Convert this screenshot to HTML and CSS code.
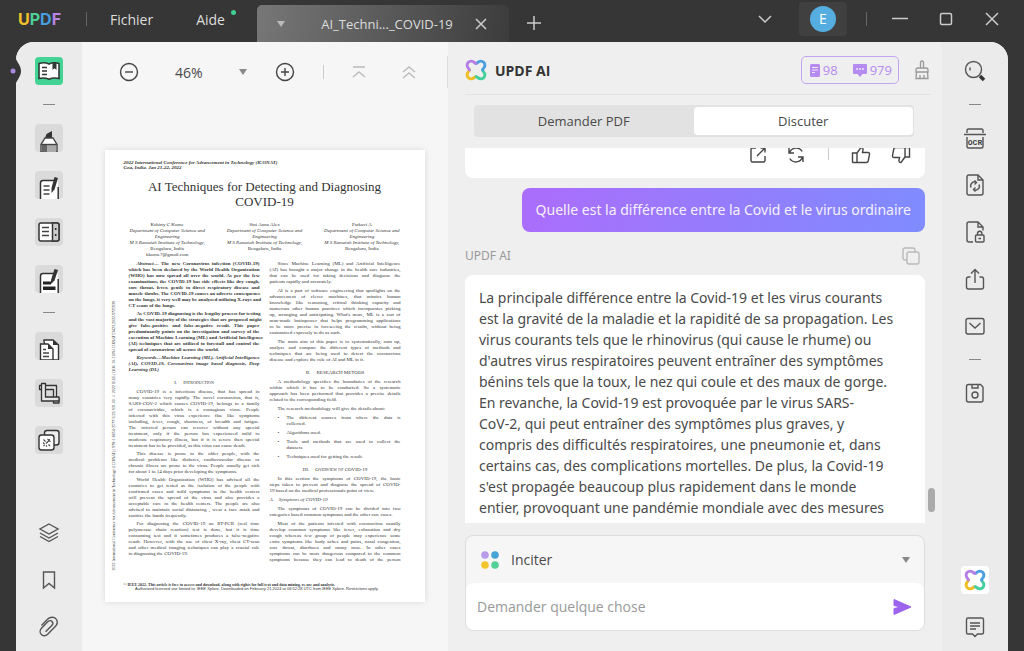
FILE: index.html
```html
<!DOCTYPE html>
<html lang="fr">
<head>
  <meta charset="UTF-8" />
  <meta name="viewport" content="width=device-width, initial-scale=1" />
  <title>UPDF - AI_Techniques_COVID-19</title>
  <link rel="stylesheet" href="styles.css">
</head>
<body>
  <svg class="defs" aria-hidden="true">
    <symbol id="clover" viewBox="0 0 24 24">
      <g fill="none" stroke-width="3.2" stroke-linecap="round">
        <path stroke="#f0bd22" transform="rotate(-90 12 12)" d="M4.8 12C4.8 10.5 2.3 9.5 2.3 6.8A4.5 4.5 0 0 1 6.8 2.3C9.5 2.3 10.5 4.8 12 4.8"/>
        <path stroke="#45cf9b" transform="rotate(180 12 12)" d="M4.8 12C4.8 10.5 2.3 9.5 2.3 6.8A4.5 4.5 0 0 1 6.8 2.3C9.5 2.3 10.5 4.8 12 4.8"/>
        <path stroke="#4a9fe0" transform="rotate(90 12 12)" d="M4.8 12C4.8 10.5 2.3 9.5 2.3 6.8A4.5 4.5 0 0 1 6.8 2.3C9.5 2.3 10.5 4.8 12 4.8"/>
        <path stroke="#b57de6" d="M4.8 12C4.8 10.5 2.3 9.5 2.3 6.8A4.5 4.5 0 0 1 6.8 2.3C9.5 2.3 10.5 4.8 12 4.8"/>
      </g>
    </symbol>
  </svg>

  <header class="titlebar">
    <div class="logo"><span class="u">U</span><span class="p">P</span><span class="d">D</span><span class="f">F</span></div>
    <span class="bar"></span>
    <nav class="menu">
      <a href="#">Fichier</a>
      <a href="#" class="has-dot">Aide</a>
    </nav>
    <div class="doc-tab">
      <button aria-label="Liste des onglets"><span class="caret"></span></button>
      <span class="doc-name">AI_Techni..._COVID-19</span>
      <button aria-label="Fermer l'onglet"><svg width="12" height="12" viewBox="0 0 12 12"><path d="M1 1l10 10M11 1L1 11"/></svg></button>
    </div>
    <button class="new-tab" aria-label="Nouvel onglet"><svg width="14" height="14" viewBox="0 0 14 14"><path d="M7 0v14M0 7h14"/></svg></button>
    <div class="win-controls">
      <button aria-label="Plus"><svg width="14" height="14" viewBox="0 0 14 14"><path d="M1 4l6 6 6-6"/></svg></button>
      <button class="account" aria-label="Compte"><span class="avatar">E</span></button>
      <span class="bar"></span>
      <button class="win-btn" aria-label="Réduire"><svg width="18" height="14" viewBox="0 0 18 14"><path d="M1 6.500h16"/></svg></button>
      <button class="win-btn" aria-label="Agrandir"><svg width="14" height="14" viewBox="0 0 14 14"><rect x="1.500" y="1.500" width="11" height="11" rx="1.500"/></svg></button>
      <button class="win-btn" aria-label="Fermer"><svg width="14" height="14" viewBox="0 0 14 14"><path d="M1 1l12 12M13 1L1 13"/></svg></button>
    </div>
  </header>

  <main class="window">
    <svg class="notch" width="14" height="32" viewBox="0 0 14 32"><path d="M0 0h5c0 6 6 9 6 16s-6 10-6 16H0z" fill="#363636"/><circle cx="3" cy="16" r="2.500" fill="#a98ae0"/></svg>

    <aside class="rail">
      <div class="rail-group">
        <button class="tile active" aria-label="Lecture"><svg viewBox="0 0 28 28">
          <path d="M4 6.500c3-1 7-1 10 .5 3-1.500 7-1.500 10-.5v15c-3-.6-7-.6-10 .8-3-1.400-7-1.400-10-.8z" fill="#fff" stroke="#2f3a36" stroke-width="1.600"/>
          <path d="M7 10.500h5M7 14h5M7 17.500h5" stroke="#333" stroke-width="1.500"/><path d="M17.500 5h4v8l-2-1.800-2 1.800z" fill="#2f3a36"/></svg></button>
        <span class="dash"></span>
        <button class="tile" aria-label="Surligner"><svg viewBox="0 0 28 28">
          <path d="M10 14l1.500-4L17 7v7z" fill="#333"/><path d="M10 14h8l4 6.500V28H6v-7.500z" fill="#fff" stroke="#444" stroke-width="1.400"/><path d="M7 21h14v7H7z" fill="#aaa"/><path d="M7 21h5v7H7z" fill="#666"/><path d="M6 20.500h16" stroke="#444" stroke-width="1.400"/></svg></button>
        <button class="tile" aria-label="Modifier"><svg viewBox="0 0 28 28">
          <path d="M5.500 28V12c0-1.500.8-2.500 2.500-2.500h15V28z" fill="#fff"/><path d="M5.500 28V12c0-1.500.8-2.500 2.500-2.500h11M23.200 16v12" fill="none" stroke="#333" stroke-width="1.500"/>
          <path d="M8.500 15h6M8.500 19h6M8.500 23h6" stroke="#444" stroke-width="1.400"/><path d="M19.500 6l3.500 1-3.500 11.500-3 3.500V17z" fill="#333"/></svg></button>
        <button class="tile" aria-label="Formulaire"><svg viewBox="0 0 28 28">
          <rect x="4" y="5" width="20" height="18" rx="2" fill="#fff" stroke="#333" stroke-width="1.500"/><path d="M17.500 5H22a2 2 0 0 1 2 2v14a2 2 0 0 1-2 2h-4.500z" fill="#ccc" stroke="#333" stroke-width="1.500"/>
          <path d="M7 9.500h7M7 13.500h7M7 17.500h7" stroke="#444" stroke-width="1.400"/><circle cx="20.700" cy="11" r="1" fill="#222"/><circle cx="20.700" cy="17" r="1" fill="#222"/></svg></button>
        <button class="tile" aria-label="Caviarder"><svg viewBox="0 0 28 28">
          <path d="M5.500 28V11c0-1.500.8-2.500 2.500-2.500h15V28z" fill="#fff"/><path d="M5.500 28V11c0-1.500.8-2.500 2.500-2.500h11M23.200 14v14" fill="none" stroke="#333" stroke-width="1.500"/>
          <path d="M8 16.500h8v3H8zM8 21.500h12.500v3.500H8z" fill="#222"/><path d="M19.500 4l3.500 1-3.500 10.500-3.500 3.500v-4z" fill="#333"/></svg></button>
        <span class="dash"></span>
        <button class="tile" aria-label="Organiser les pages"><svg viewBox="0 0 28 28">
          <path d="M9 9.500V8h9l5.500 5V28H14z" fill="#fff" stroke="#333" stroke-width="1.400"/><path d="M18 8l5.500 5H18z" fill="#333"/>
          <path d="M5.500 28V12h7.500l5 5v11z" fill="#fff" stroke="#333" stroke-width="1.400"/><path d="M13 12l5 5h-5z" fill="#333"/><path d="M8 17.500h3M8 21h6M8 24.500h6" stroke="#444" stroke-width="1.300"/></svg></button>
        <button class="tile" aria-label="Recadrer"><svg viewBox="0 0 28 28">
          <g fill="#e6e6e6" stroke="#333" stroke-width="1.300" stroke-linejoin="round">
            <path d="M4.500 6.500h17v13.500h2.500v4h-5.500V10.500h-14z"/>
            <path d="M6.500 4.500h4v13.500h13.500v4H6.500z"/>
          </g></svg></button>
        <button class="tile" aria-label="Filigrane"><svg viewBox="0 0 28 28">
          <rect x="9.500" y="4.500" width="14.500" height="14.500" rx="2.500" fill="#eee" stroke="#333" stroke-width="1.400"/><rect x="4" y="9" width="15" height="15" rx="2.500" fill="#fff" stroke="#333" stroke-width="1.400"/>
          <path d="M8 16.500l1.500 1.500M11 19.500l1 1M8.500 20l1.200-1.200M11 17.500l4-4M13.500 18.500l1.500 1.500M8.500 13.500l2 2M12.500 12.800l3 3" stroke="#444" stroke-width="1.100"/></svg></button>
      </div>
      <div class="rail-group">
        <button class="tile plain" aria-label="Calques"><svg viewBox="0 0 28 28"><path d="M14 5l9 5-9 5-9-5zM5 14l9 5 9-5M5 17.500l9 5 9-5"/></svg></button>
        <button class="tile plain" aria-label="Signets"><svg viewBox="0 0 28 28"><path d="M8.500 6h11v16L14 17.500 8.500 22z"/></svg></button>
        <button class="tile plain" aria-label="Pièces jointes"><svg viewBox="0 0 28 28"><path d="M6.500 12.500l6-6.200c3-3 7.500-2.400 9 .2 1.400 2.500.6 5-1 6.700l-7.800 8c-2 2-5 2-6.500.2-1.600-1.800-1.300-4.500.3-6.200l6.200-6.400c1.300-1.300 3.200-1.500 4.300-.4s.9 2.900-.2 4l-6.200 6.300"/></svg></button>
      </div>
    </aside>

    <section class="viewer">
      <div class="toolbar">
        <button aria-label="Zoom arrière"><svg width="20" height="20" viewBox="0 0 20 20"><circle cx="10" cy="10" r="8.500"/><path d="M6 10h8"/></svg></button>
        <label class="zoom">
          <select aria-label="Niveau de zoom"><option>46%</option><option>100%</option></select>
          <span class="caret"></span>
        </label>
        <button aria-label="Zoom avant"><svg width="20" height="20" viewBox="0 0 20 20"><circle cx="10" cy="10" r="8.500"/><path d="M6 10h8M10 6v8"/></svg></button>
        <span class="bar"></span>
        <button class="faded" aria-label="Première page"><svg width="14" height="14" viewBox="0 0 14 14"><path d="M1 2h12M1 12l6-5 6 5"/></svg></button>
        <button class="faded far" aria-label="Page précédente"><svg width="14" height="14" viewBox="0 0 14 14"><path d="M1 7l6-5 6 5M1 13l6-5 6 5"/></svg></button>
        <span class="bar edge"></span>
      </div>

      <article class="page">
        <div class="side-note">2022 International Conference for Advancement in Technology (ICONAT) | 978-1-6654-2577-3/22/$31.00 ©2022 IEEE | DOI: 10.1109/ICONAT53423.2022.9725939</div>
        <p class="conf">2022 International Conference for Advancement in Technology (ICONAT)<br>Goa, India. Jan 21-22, 2022</p>
        <h1>AI Techniques for Detecting and Diagnosing<br>COVID-19</h1>
        <div class="authors">
          <p>Kshirty C Kurne<br><i>Department of Computer Science and<br>Engineering<br>M S Ramaiah Institute of Technology,</i><br>Bengaluru, India<br>kkurne7@gmail.com</p>
          <p>Sini Anna Alex<br><i>Department of Computer Science and<br>Engineering<br>M S Ramaiah Institute of Technology,</i><br>Bengaluru, India</p>
          <p>Parkavi A<br><i>Department of Computer Science and<br>Engineering<br>M S Ramaiah Institute of Technology,</i><br>Bengaluru, India</p>
        </div>
        <div class="columns">
          <div class="col">
            <p class="abstract"><i>Abstract</i>— The new Coronavirus infection (COVID-19)<br>which has been declared by the World Health Organization<br>(WHO) has now spread all over the world. As per the few<br>examinations, the COVID-19 has side effects like dry cough,<br>sore throat, fever, gentle to direct respiratory disease and<br>muscle throbs. The COVID-19 causes an adverse consequence<br>on the lungs, it very well may be analyzed utilizing X-rays and<span class="last">CT scans of the lungs.</span></p>
            <p class="abstract">As COVID-19 diagnosing is the lengthy process for testing<br>and the vast majority of the strategies that are proposed might<br>give false-positive and false-negative result. This paper<br>predominantly points on the investigation and survey of the<br>execution of Machine Learning (ML) and Artificial Intelligence<br>(AI) techniques that are utilized to forestall and control the<span class="last">spread of coronavirus all across the world.</span></p>
            <p class="abstract"><i>Keywords—Machine Learning (ML), Artificial Intelligence<br>(AI), COVID-19, Coronavirus image based diagnosis, Deep<span class="last">Learning (DL)</span></i></p>
            <h2>I. &nbsp; &nbsp; Introduction</h2>
            <p>COVID-19 is a infectious disease, that has spread in<br>many countries very rapidly. The novel coronavirus, that is,<br>SARS-COV-2 which causes COVID-19, belongs to a family<br>of coronaviridae, which is a contagious virus. People<br>infected with this virus experience flue like symptoms<br>including, fever, cough, shortness, of breadth and fatigue.<br>The infected person can recover without any special<br>treatment, only if the person has experienced mild to<br>moderate respiratory illness, but if it is severe then special<span class="last">treatment has to be provided, as this virus can cause death.</span></p>
            <p>This disease is prone to the older people, with the<br>medical problems like diabetes, cardiovascular disease or<br>chronic illness are prone to the virus. People usually get sick<span class="last">for about 1 to 14 days prior developing the symptoms.</span></p>
            <p>World Health Organization (WHO) has advised all the<br>countries to get tested as the isolation of the people with<br>confirmed cases and mild symptoms in the health centers<br>will prevent the spread of the virus and also provides a<br>acceptable care in the health centers. The people are also<br>advised to maintain social distancing , wear a face mask and<span class="last">sanitize the hands frequently.</span></p>
            <p>For diagnosing the COVID-19 an RT-PCR (real time<br>polymerase chain reaction) test is done, but it is time<br>consuming test and it sometimes produces a false-negative<br>result. However, with the use of chest X-ray, chest CT-scan<br>and other medical imaging techniques can play a crucial role<span class="last">in diagnosing the COVID-19.</span></p>
          </div>
          <div class="col right">
            <p>Since Machine Learning (ML) and Artificial Intelligence<br>(AI) has brought a major change in the health care industries,<br>that can be used for taking decisions and diagnose the<span class="last">patients rapidly and accurately.</span></p>
            <p>AI is a part of software engineering that spotlights on the<br>advancement of clever machines, that mimics human<br>knowledge like reasoning, critical thinking capacity and<br>numerous other human practices which incorporates picking<br>up, arranging and anticipating. What's more, ML is a sort of<br>man-made brainpower that helps programming applications<br>to be more precise in foreseeing the results, without being<span class="last">customized expressly to do as such.</span></p>
            <p>The main aim of this paper is to systematically, sum up,<br>analyze and compare the different types of methods and<br>techniques that are being used to detect the coronavirus<span class="last">disease and explore the role of AI and ML in it.</span></p>
            <h2>II. &nbsp; &nbsp; RESEARCH METODS</h2>
            <p>A methodology specifies the boundaries of the research<br>within which it has to be conducted. So a systematic<br>approach has been performed that provides a precise details<span class="last">related to the corresponding field.</span></p>
            <p class="flush">The research methodology will give the details about:</p>
            <ul>
              <li>The different sources from where the data is<span class="last">collected.</span></li>
              <li><span class="last">Algorithms used.</span></li>
              <li>Tools and methods that are used to collect the<span class="last">datasets</span></li>
              <li><span class="last">Techniques used for getting the result.</span></li>
            </ul>
            <h2>III. &nbsp; &nbsp; Overview of COVID-19</h2>
            <p>In this section the symptoms of COVID-19, the basic<br>steps taken to prevent and diagnose the spread of COVID-<span class="last">19 based on the medical professionals point of view.</span></p>
            <h3>A. &nbsp; &nbsp;Symptoms of COVID-19</h3>
            <p>The symptoms of COVID-19 can be divided into two<span class="last">categories based common symptoms and the other rare cases.</span></p>
            <p>Most of the patients infected with coronavirus usually<br>develop common symptoms like fever, exhaustion and dry<br>cough whereas few group of people may experience some<br>extra symptoms like body aches and pains, nasal congestion,<br>sore throat, diarrhoea and runny nose. In other cases<br>symptoms can be more dangerous compared to the common<br>symptoms because they can lead to death of the person</p>
          </div>
        </div>
        <footer>
          <b>© IEEE 2022. This article is free to access and download, along with rights for full text and data mining, re-use and analysis.</b>
          <span>Authorized licensed use limited to: IEEE Xplore. Downloaded on February 21,2024 at 06:52:28 UTC from IEEE Xplore. Restrictions apply.</span>
        </footer>
      </article>
    </section>

    <section class="ai">
      <div class="ai-head">
        <svg width="22" height="22"><use href="#clover"/></svg>
        <h2>UPDF AI</h2>
        <div class="credits">
          <svg width="10" height="13" viewBox="0 0 10 13"><rect width="10" height="13" rx="1.500" fill="#b58bf0"/><path d="M2 3.500h6M2 6h6M2 8.500h3" stroke="#efe6fb"/></svg>
          <span>98</span>
          <svg class="talk" width="14" height="13" viewBox="0 0 14 13"><path d="M1 0h12a1 1 0 0 1 1 1v8a1 1 0 0 1-1 1H9.500L7 13l-2.500-3H1a1 1 0 0 1-1-1V1a1 1 0 0 1 1-1z" fill="#b58bf0"/><path d="M3 5h2M6 5h2M9 5h2" stroke="#efe6fb" stroke-width="1.500"/></svg>
          <span>979</span>
        </div>
        <button class="broom" aria-label="Effacer"><svg width="14" height="20" viewBox="0 0 14 20"><path d="M5.500 8V2.500a1.500 1.500 0 0 1 3 0V8M3 8h8a2 2 0 0 1 2 2v2H1v-2a2 2 0 0 1 2-2zM1.500 12L1 18.500h12l-.5-6.500M5 18v-3M9 18v-3"/></svg></button>
      </div>

      <div class="switch">
        <button>Demander PDF</button>
        <button class="on">Discuter</button>
      </div>

      <div class="chat">
        <div class="card actions">
          <button aria-label="Ouvrir"><svg width="18" height="18" viewBox="0 0 18 18"><path d="M7 2H3.500A1.500 1.500 0 0 0 2 3.500v11A1.500 1.500 0 0 0 3.500 16h11a1.500 1.500 0 0 0 1.500-1.500V10M8 10l7.500-7.500M11.500 2H16v4.500"/></svg></button>
          <button aria-label="Régénérer"><svg width="18" height="18" viewBox="0 0 18 18"><path d="M2 2v5h5M2.500 7a7 7 0 0 1 12.700-1.500M16 16v-5h-5M15.500 11A7 7 0 0 1 2.800 12.500"/></svg></button>
          <span class="bar"></span>
          <button aria-label="J'aime"><svg width="20" height="18" viewBox="0 0 20 18"><path d="M1.500 7H6v9.500H2.500a1 1 0 0 1-1-1zM6 7l4-5.500c1.500 0 2.200 1 2 2.200L11.500 6.500H17a1.500 1.500 0 0 1 1.500 1.800l-1.300 6.700a2 2 0 0 1-2 1.500H6"/></svg></button>
          <button aria-label="Je n'aime pas"><svg width="20" height="18" viewBox="0 0 20 18"><path d="M18.500 11H14V1.500h4.500zM14 11l-4 5.500c-1.500 0-2.200-1-2-2.200l.5-2.800H3a1.500 1.500 0 0 1-1.500-1.800L2.800 3a2 2 0 0 1 2-1.500H14"/></svg></button>
        </div>
        <div class="question">Quelle est la différence entre la Covid et le virus ordinaire</div>
        <div class="sender">
          <span>UPDF AI</span>
          <button aria-label="Copier"><svg width="18" height="18" viewBox="0 0 18 18"><rect x="5" y="5" width="12" height="12" rx="2"/><path d="M5 13H3a2 2 0 0 1-2-2V3a2 2 0 0 1 2-2h8a2 2 0 0 1 2 2v2"/></svg></button>
        </div>
        <div class="card answer">
          La principale différence entre la Covid-19 et les virus courants<br>
          est la gravité de la maladie et la rapidité de sa propagation. Les<br>
          virus courants tels que le rhinovirus (qui cause le rhume) ou<br>
          d'autres virus respiratoires peuvent entraîner des symptômes<br>
          bénins tels que la toux, le nez qui coule et des maux de gorge.<br>
          En revanche, la Covid-19 est provoquée par le virus SARS-<br>
          CoV-2, qui peut entraîner des symptômes plus graves, y<br>
          compris des difficultés respiratoires, une pneumonie et, dans<br>
          certains cas, des complications mortelles. De plus, la Covid-19<br>
          s'est propagée beaucoup plus rapidement dans le monde<br>
          entier, provoquant une pandémie mondiale avec des mesures
        </div>
        <span class="scroll-thumb"></span>
      </div>

      <form class="composer">
        <label class="prompt-type">
          <svg width="18" height="18" viewBox="0 0 18 18"><circle cx="4" cy="4" r="3.800" fill="#b79be8"/><circle cx="14" cy="4" r="3.800" fill="#46a3d6"/><circle cx="4" cy="14" r="3.800" fill="#f3c52c"/><circle cx="14" cy="14" r="3.800" fill="#55cf98"/></svg>
          <select aria-label="Type de demande"><option>Inciter</option><option>Résumer</option><option>Traduire</option></select>
          <span class="caret"></span>
        </label>
        <div class="ask">
          <input type="text" placeholder="Demander quelque chose" aria-label="Demander quelque chose">
          <button type="button" aria-label="Envoyer"><svg width="18" height="16" viewBox="0 0 18 16"><path d="M1 .5L18 8 1 15.500v-6L8 8 1 6.500z" fill="#9b63ee" stroke="#9b63ee" stroke-linejoin="round"/></svg></button>
        </div>
      </form>
    </section>

    <aside class="rail">
      <div class="rail-group">
        <button class="tile plain" aria-label="Rechercher"><svg viewBox="0 0 28 28"><circle cx="12.500" cy="12.500" r="8"/><path d="M9 10.500v3"/><path d="M19 19l4 4" stroke="#333" stroke-width="3.500"/></svg></button>
        <span class="dash"></span>
        <button class="tile plain" aria-label="OCR"><svg viewBox="0 0 28 28"><path d="M6 9V6.500A1.500 1.500 0 0 1 7.500 5h13A1.500 1.500 0 0 1 22 6.500V9M3 10.500h22M6 13v9.500A1.500 1.500 0 0 0 7.500 24h13a1.500 1.500 0 0 0 1.500-1.500V13"/><text x="14" y="20.500">OCR</text></svg></button>
        <button class="tile plain" aria-label="Convertir"><svg viewBox="0 0 28 28"><path d="M17 4H8a2 2 0 0 0-2 2v16a2 2 0 0 0 2 2h12a2 2 0 0 0 2-2V9zM17 4v5h5"/><path d="M10 16.500a4 4 0 0 1 5.500-5.200M18 13.500a4 4 0 0 1-5.500 5.200M13.500 9.500l2 2-2 2M14.500 16.500l-2 2 2 2"/></svg></button>
        <button class="tile plain" aria-label="Protéger"><svg viewBox="0 0 28 28"><path d="M12 24H8a2 2 0 0 1-2-2V6a2 2 0 0 1 2-2h9l5 5v3.500M17 4v5h5"/><rect x="14.500" y="17" width="8.500" height="7" rx="1"/><path d="M16.500 17v-1.500a2.200 2.200 0 0 1 4.400 0V17M17.500 20.500h2.500"/></svg></button>
        <button class="tile plain" aria-label="Partager"><svg viewBox="0 0 28 28"><path d="M9.500 12H7.500A2 2 0 0 0 5.500 14v8a2 2 0 0 0 2 2h13a2 2 0 0 0 2-2v-8a2 2 0 0 0-2-2h-2M14 18V5M10 8.500L14 4.500l4 4"/></svg></button>
        <button class="tile plain" aria-label="Envoyer par e-mail"><svg viewBox="0 0 28 28"><rect x="5" y="6.500" width="18" height="15.500" rx="2"/><path d="M8.500 11l5.500 5 5.500-5"/></svg></button>
        <span class="dash"></span>
        <button class="tile plain" aria-label="Enregistrer"><svg viewBox="0 0 28 28"><path d="M7.500 5.500h12L22 8v13a2 2 0 0 1-2 2H7.500a2 2 0 0 1-2-2V7.500a2 2 0 0 1 2-2zM11 5.500V9h6V5.500"/><circle cx="14" cy="16" r="3"/></svg></button>
      </div>
      <div class="rail-group">
        <button class="tile white" aria-label="UPDF AI"><svg viewBox="0 0 28 28"><use href="#clover" x="3" y="3" width="22" height="22"/></svg></button>
        <button class="tile plain" aria-label="Commentaires"><svg viewBox="0 0 28 28"><path d="M7 5h14a1.500 1.500 0 0 1 1.500 1.500v13A1.500 1.500 0 0 1 21 21h-4.500L14 23.500 11.500 21H7a1.500 1.500 0 0 1-1.500-1.500v-13A1.500 1.500 0 0 1 7 5zM9 10h10M9 13h10M9 16h6"/></svg></button>
      </div>
    </aside>
  </main>
</body>
</html>
```
FILE: styles.css
```css
* {
  box-sizing: border-box;
}

body {
  margin: 0;
  height: 100vh;
  display: flex;
  flex-direction: column;
  overflow: hidden;
  font-family: "Open Sans", "Noto Sans", sans-serif;
  font-size: 14px;
  color: #4a4a4a;
  background: #363636;
}

button, select, input {
  font: inherit;
  color: inherit;
  border: 0;
  padding: 0;
  background: none;
}

button {
  display: flex;
  align-items: center;
  justify-content: center;
  cursor: pointer;
}

h1, h2, h3, p, ul {
  margin: 0;
  padding: 0;
  font-size: inherit;
  font-weight: normal;
}

svg {
  display: block;
  flex-shrink: 0;
}

.defs {
  position: absolute;
  width: 0;
  height: 0;
}

select {
  appearance: none;
  flex: 1;
  outline: none;
}

.bar {
  width: 1px;
  height: 14px;
  background: #ccc;
}

.caret {
  border: 4px solid transparent;
  border-top: 6px solid #888;
  border-bottom: 0;
}

/* title bar */
.titlebar {
  height: 42px;
  flex-shrink: 0;
  display: flex;
  align-items: center;
  padding-left: 18px;
  color: #ddd;
}

.titlebar svg {
  fill: none;
  stroke: #ccc;
  stroke-width: 1.5;
}

.titlebar .bar {
  background: #666;
  margin-bottom: 4px;
}

.logo {
  width: 68px;
  margin-bottom: 4px;
  font: bold 16px/20px "Inter", sans-serif;
}

.u { color: #f3c22b; }
.p { color: #4dcf96; }
.d { color: #479fe0; }
.f { color: #b886e8; }

.menu {
  display: flex;
  gap: 43px;
  margin: 0 32px 4px 23px;
}

.menu a {
  color: inherit;
  text-decoration: none;
}

.has-dot {
  position: relative;
}

.has-dot::after {
  content: "";
  position: absolute;
  top: 0;
  right: -11px;
  width: 5px;
  height: 5px;
  border-radius: 50%;
  background: #3fd093;
}

.doc-tab {
  width: 252px;
  align-self: flex-end;
  height: 37px;
  display: flex;
  align-items: center;
  justify-content: space-between;
  padding: 0 22px 0 20px;
  border-radius: 5px 5px 0 0;
  background: linear-gradient(100deg, #777, #5a5a5a 50%, #3c3c3c);
}

.doc-name {
  margin-left: 14px;
  font-size: 13px;
}

.doc-tab .caret {
  border-top-color: #bbb;
}

.new-tab {
  margin: 4px 0 0 18px;
}

.win-controls {
  margin-left: auto;
  display: flex;
  align-items: center;
  padding: 0 23px 4px 0;
}

.account {
  width: 48px;
  height: 34px;
  margin: 0 19px 0 27px;
  border-radius: 4px;
  background: #404040;
}

.avatar {
  width: 26px;
  height: 26px;
  border-radius: 50%;
  background: #56aee0;
  color: #fff;
  line-height: 26px;
}

.win-controls .bar {
  margin: 0;
}

.win-btn {
  width: 18px;
  margin-left: 28px;
}

.win-btn:nth-of-type(3) {
  margin-left: 24px;
}

/* main window */
.window {
  flex: 1;
  min-height: 0;
  margin: 0 16px;
  display: flex;
  position: relative;
  border-radius: 18px 18px 0 0;
  background: #f6f6f6;
}

.notch {
  position: absolute;
  left: -6px;
  top: 13px;
}

.rail {
  width: 66px;
  flex-shrink: 0;
  display: flex;
  flex-direction: column;
  justify-content: space-between;
  padding: 15px 0 10px;
  background: #ebebeb;
}

.rail:first-of-type {
  border-top-left-radius: 18px;
}

.rail:last-of-type {
  border-top-right-radius: 18px;
}

.rail-group {
  display: flex;
  flex-direction: column;
  align-items: center;
  gap: 19px;
}

.dash {
  width: 12px;
  height: 1px;
  background: #888;
}

.tile {
  width: 28px;
  height: 28px;
  border-radius: 4px;
  background: #dadada;
}

.tile svg {
  width: 28px;
  height: 28px;
}

.tile.active {
  background: #43d394;
}

.tile.white {
  background: #fff;
}

.tile.plain {
  background: none;
}

.tile.plain svg {
  fill: none;
  stroke: #555;
  stroke-width: 1.4;
}

.tile text {
  font: bold 8px "Liberation Mono", monospace;
  text-anchor: middle;
  fill: #444;
  stroke: none;
}

/* document viewer */
.viewer {
  flex: 1;
  min-width: 0;
  display: flex;
  flex-direction: column;
  align-items: center;
}

.toolbar {
  align-self: stretch;
  height: 60px;
  flex-shrink: 0;
  display: flex;
  align-items: center;
  gap: 28px;
  padding-left: 37px;
}

.toolbar svg {
  fill: none;
  stroke: #444;
  stroke-width: 1.4;
}

.toolbar .faded svg {
  stroke: #bbb;
}

.toolbar .far {
  margin-left: 8px;
}

.toolbar .edge {
  height: 32px;
  margin-left: auto;
  background: #ddd;
}

.zoom {
  width: 72px;
  margin-left: 8px;
  display: flex;
  align-items: center;
}

.zoom select {
  min-width: 0;
}

.page {
  width: 320px;
  height: 452px;
  margin-top: 48px;
  margin-right: 1px;
  flex-shrink: 0;
  position: relative;
  padding: 10px 24px 0;
  background: #fff;
  box-shadow: 0 0 6px rgba(0, 0, 0, 0.12);
  font: 5px/6px "Liberation Serif", serif;
  color: #333;
}

.side-note {
  position: absolute;
  left: 6px;
  bottom: 32px;
  writing-mode: vertical-rl;
  transform: rotate(180deg);
  font-size: 4px;
  line-height: 5px;
  white-space: nowrap;
}

.conf {
  margin-left: -5px;
  font-weight: bold;
  font-style: italic;
  line-height: 5px;
}

.page h1 {
  margin-top: 9px;
  font-size: 13px;
  line-height: 15px;
  text-align: center;
}

.authors {
  display: grid;
  grid-template-columns: repeat(3, 1fr);
  height: 37px;
  margin: 13px -10px 0;
  text-align: center;
}

.columns {
  display: grid;
  grid-template-columns: repeat(2, minmax(0, 1fr));
  gap: 10px;
  margin-top: 2px;
}

.col p {
  margin-bottom: 2px;
  text-indent: 8px;
  text-align: justify;
  text-align-last: justify;
  white-space: nowrap;
}

.col.right p,
.col.right h3 {
  margin-bottom: 3px;
}

.col .abstract {
  font-weight: bold;
}

.last {
  display: block;
  text-indent: 0;
  text-align-last: left;
}

.col .flush {
  text-align-last: left;
}

.page h2 {
  margin: 7px 0 3px;
  text-align: center;
  font-variant: small-caps;
}

.page h3 {
  font-style: italic;
}

.page ul {
  list-style: none;
}

.page li {
  position: relative;
  margin: 0 0 3px 17px;
  text-align-last: justify;
}

.page li::before {
  content: "•";
  position: absolute;
  left: -9px;
}

.page footer {
  position: absolute;
  left: 19px;
  right: 46px;
  bottom: 11px;
  line-height: 4px;
  white-space: nowrap;
}

.page footer b,
.page footer span {
  display: block;
  font-size: 4px;
}

.page footer span {
  text-align: right;
  font-family: "Liberation Sans", sans-serif;
}

/* AI panel */
.ai {
  width: 494px;
  flex-shrink: 0;
  display: flex;
  flex-direction: column;
  padding: 0 17px 20px;
  background: #efefef;
}

.ai-head {
  height: 53px;
  display: flex;
  align-items: center;
  padding-top: 4px;
  margin-right: -6px;
  border-bottom: 1px solid #e3e3e3;
}

.ai-head h2 {
  margin-left: 8px;
  font-size: 14px;
  font-weight: bold;
  color: #333;
}

.credits {
  margin-left: auto;
  height: 28px;
  display: flex;
  align-items: center;
  gap: 3px;
  padding: 0 6px 0 8px;
  border: 1px solid #c4a4f0;
  border-radius: 5px;
  font-size: 13px;
  color: #b58bf0;
}

.talk {
  margin-left: 12px;
}

.broom {
  margin-left: 16px;
  padding-right: 2px;
}

.broom svg {
  fill: none;
  stroke: #999;
  stroke-width: 1.3;
}

.switch {
  display: flex;
  height: 32px;
  margin: 10px 11px 11px 9px;
  padding: 2px 1px 2px 0;
  border-radius: 4px;
  background: #e2e2e2;
}

.switch button {
  flex: 1;
  border-radius: 4px;
  font-size: 13px;
}

.switch .on {
  background: #fff;
}

.chat {
  flex: 1;
  min-height: 0;
  display: flex;
  flex-direction: column;
  position: relative;
  overflow: hidden;
  margin-right: -12px;
  padding-right: 12px;
  font-family: "Noto Sans", "Open Sans", sans-serif;
}

.card {
  flex-shrink: 0;
  border-radius: 8px;
  background: #fff;
}

.actions {
  height: 32px;
  margin-top: -2px;
  display: flex;
  justify-content: flex-end;
  align-items: flex-start;
  gap: 20px;
  padding-right: 14px;
  border-radius: 0 0 8px 8px;
}

.actions svg,
.sender svg {
  fill: none;
  stroke: #444;
  stroke-width: 1.4;
}

.actions .bar {
  margin: 0 2px 0 3px;
}

.question {
  align-self: flex-end;
  flex-shrink: 0;
  margin-top: 10px;
  padding: 0 14px;
  line-height: 44px;
  border-radius: 8px;
  color: #f6f0ff;
  background: linear-gradient(100deg, #ab6dfc, #7f8cfe);
}

.sender {
  display: flex;
  justify-content: space-between;
  align-items: center;
  height: 43px;
  padding: 4px 5px 0 0;
  flex-shrink: 0;
  font-size: 12px;
  color: #999;
}

.sender svg {
  stroke: #bbb;
}

.answer {
  padding: 12px 14px;
  line-height: 21px;
  white-space: nowrap;
}

.scroll-thumb {
  position: absolute;
  right: 2px;
  bottom: 11px;
  width: 7px;
  height: 24px;
  border-radius: 4px;
  background: #aaa;
}

.composer {
  margin-top: 12px;
  border: 1px solid #ddd;
  border-radius: 8px;
  background: #f6f6f6;
}

.prompt-type {
  height: 47px;
  display: flex;
  align-items: center;
  gap: 12px;
  padding: 0 14px 0 15px;
}

.ask {
  height: 47px;
  display: flex;
  align-items: center;
  padding: 0 13px 0 11px;
  border-radius: 8px;
  background: #fff;
}

.ask input {
  flex: 1;
  min-width: 0;
  outline: none;
}

.ask input::placeholder {
  color: #999;
}
```
